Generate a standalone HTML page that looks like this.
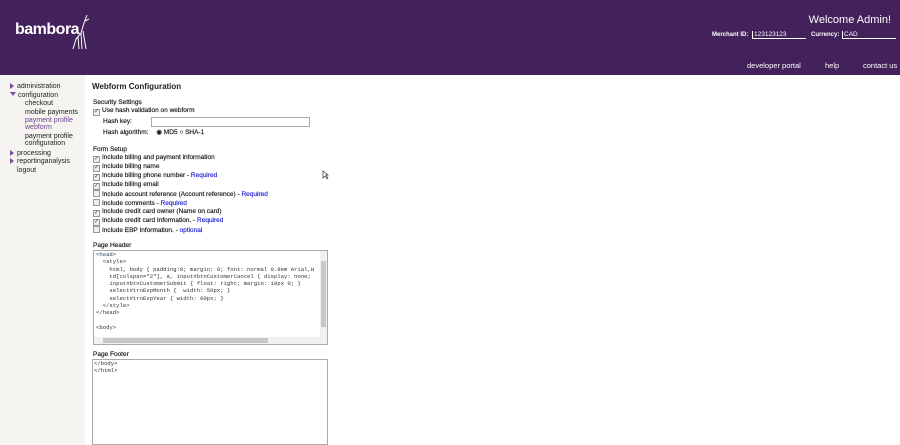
<!DOCTYPE html>
<html style="overflow:hidden;height:445px"><head><style>
body{margin:0;width:900px;height:445px;overflow:hidden;font-family:"Liberation Sans",Arial,sans-serif;background:#fff;position:relative}
.hdr{position:absolute;left:0;top:0;width:900px;height:75px;background:#43215a;color:#fff}
.abs{position:absolute}
.side{position:absolute;left:0;top:75px;width:85px;height:370px;background:#f5f4f1;font-size:7px;color:#222}
.side div{position:absolute;white-space:nowrap;line-height:7px}
.tri{display:inline-block;width:0;height:0;border-top:3px solid transparent;border-bottom:3px solid transparent;border-left:4px solid #7a4e9a;margin-right:3px;vertical-align:-1px}
.trid{display:inline-block;width:0;height:0;border-left:3px solid transparent;border-right:3px solid transparent;border-top:4px solid #7a4e9a;margin-right:2px;vertical-align:1px}
.m{font-size:6.5px;color:#111;position:absolute;white-space:nowrap;line-height:8px;-webkit-text-stroke:0.15px #111}
.cb{display:inline-block;width:5px;height:5px;border:1px solid #999;background:#eee;margin-right:2px;vertical-align:-1px;font-size:6px;line-height:5px;text-align:center;color:#444;-webkit-text-stroke:0}
.req{color:#1a1acc;-webkit-text-stroke:0.15px #1a1acc}
pre{margin:0;font-family:"Liberation Mono",monospace;font-size:5.6px;line-height:7.3px;color:#333}
</style></head><body>
<div class="hdr">
 <div class="abs" style="left:15px;top:21px;font-size:16px;font-weight:bold;letter-spacing:-0.5px">bambora</div>
 <svg class="abs" style="left:70px;top:13px" width="20" height="38" viewBox="0 0 20 38"><g stroke="#fff" stroke-width="1" fill="none"><path d="M17 2 L14 10 L11 20 L6 26 L3 36"/><path d="M11 20 L12 36 M8 24 L9 36 M13 18 L16 36 M15 8 L19 6"/></g></svg>
 <div class="abs" style="right:9px;top:14px;font-size:11px">Welcome Admin!</div>
 <div class="abs" style="left:712px;top:32px;font-size:6px;font-weight:bold">Merchant ID:</div>
 <div class="abs" style="left:752px;top:31px;width:52px;height:7px;border-bottom:1px solid #fff;border-left:1px solid #fff;font-size:6.5px;padding-left:1px">123123123</div>
 <div class="abs" style="left:811px;top:32px;font-size:6px;font-weight:bold">Currency:</div>
 <div class="abs" style="left:842px;top:31px;width:52px;height:7px;border-bottom:1px solid #fff;border-left:1px solid #fff;font-size:6.5px;padding-left:1px">CAD</div>
 <div class="abs" style="left:747px;top:61px;font-size:7.5px">developer portal</div>
 <div class="abs" style="left:825px;top:61px;font-size:7.5px">help</div>
 <div class="abs" style="left:863px;top:61px;font-size:7.5px">contact us</div>
</div>
<div class="side">
 <div style="left:10px;top:8px"><span class="tri"></span>administration</div>
 <div style="left:10px;top:17px"><span class="trid"></span>configuration</div>
 <div style="left:25px;top:25px">checkout</div>
 <div style="left:25px;top:34px">mobile payments</div>
 <div style="left:25px;top:42px;color:#6b3f90">payment profile<br>webform</div>
 <div style="left:25px;top:58px">payment profile<br>configuration</div>
 <div style="left:10px;top:75px"><span class="tri"></span>processing</div>
 <div style="left:10px;top:83px"><span class="tri"></span>reportinganalysis</div>
 <div style="left:17px;top:92px">logout</div>
</div>
<div class="abs" style="left:92px;top:82px;font-size:8px;font-weight:bold;color:#222">Webform Configuration</div>
<div class="m" style="left:93px;top:99px">Security Settings</div>
<div class="m" style="left:93px;top:107px"><span class="cb">✓</span>Use hash validation on webform</div>
<div class="m" style="left:103px;top:118px">Hash key:</div>
<div class="abs" style="left:151px;top:117px;width:157px;height:8px;border:1px solid #aaa"></div>
<div class="m" style="left:103px;top:129px">Hash algorithm: <span style="margin-left:6px">◉ MD5 ○ SHA-1</span></div>
<div class="m" style="left:93px;top:146px">Form Setup</div>
<div class="m" style="left:93px;top:154px"><span class="cb">✓</span>Include billing and payment information</div>
<div class="m" style="left:93px;top:163px"><span class="cb">✓</span>Include billing name</div>
<div class="m" style="left:93px;top:172px"><span class="cb">✓</span>Include billing phone number - <span class="req">Required</span></div>
<div class="m" style="left:93px;top:181px"><span class="cb">✓</span>Include billing email</div>
<div class="m" style="left:93px;top:190px"><span class="cb"></span>Include account reference (Account reference) - <span class="req">Required</span></div>
<div class="m" style="left:93px;top:199px"><span class="cb"></span>Include comments - <span class="req">Required</span></div>
<div class="m" style="left:93px;top:208px"><span class="cb">✓</span>Include credit card owner (Name on card)</div>
<div class="m" style="left:93px;top:217px"><span class="cb">✓</span>Include credit card Information. - <span class="req">Required</span></div>
<div class="m" style="left:93px;top:226px"><span class="cb"></span>Include EBP Information. - <span class="req">optional</span></div>
<div class="m" style="left:93px;top:242px">Page Header</div>
<div class="abs" style="left:93px;top:250px;width:233px;height:93px;border:1px solid #aaa;overflow:hidden">
 <pre style="padding:0 0 0 2px"><span style="color:#246">&lt;head&gt;</span>
  &lt;style&gt;
    html, body { padding:0; margin: 0; font: normal 0.9em Arial,H
    td[colspan="2"], a, input#btnCustomerCancel { display: none;
    input#btnCustomerSubmit { float: right; margin: 10px 0; }
    select#trnExpMonth {  width: 50px; }
    select#trnExpYear { width: 60px; }
  &lt;/style&gt;
&lt;/head&gt;

&lt;body&gt;</pre>
 <div class="abs" style="right:0;top:0;width:7px;height:93px;background:#f0f0f0"><div style="position:absolute;top:10px;left:1px;width:5px;height:66px;background:#c8c8c8"></div></div>
 <div class="abs" style="left:0;bottom:0;width:226px;height:7px;background:#f0f0f0"><div style="position:absolute;left:9px;top:1px;width:165px;height:5px;background:#c8c8c8"></div></div>
</div>
<div class="m" style="left:93px;top:351px">Page Footer</div>
<div class="abs" style="left:92px;top:359px;width:234px;height:84px;border:1px solid #aaa">
 <pre style="padding:0 0 0 1px">&lt;/body&gt;
&lt;/html&gt;</pre>
</div>
<svg class="abs" style="left:322px;top:170px" width="7" height="10"><path d="M1 1 L1 8 L3 6 L5 9 L6 8 L4 5 L6 5 Z" fill="#fff" stroke="#333" stroke-width="0.7"/></svg>
</body></html>
